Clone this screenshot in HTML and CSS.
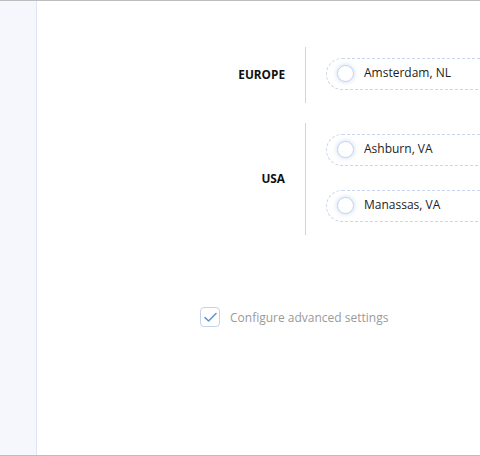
FILE: index.html
```html
<!doctype html>
<html lang="en">
<head>
  <meta charset="UTF-8">
  <title>Regions</title>
  <link rel="stylesheet" href="styles.css">
</head>
<body>
  <div class="frame">
    <div class="sidebar"></div>

    <div class="main">
      <div class="regions">
        <div class="group">
          <div class="label">EUROPE</div>
          <div class="options">
            <label class="pill"><span class="radio"></span>Amsterdam, NL</label>
          </div>
        </div>

        <div class="group">
          <div class="label">USA</div>
          <div class="options">
            <label class="pill"><span class="radio"></span>Ashburn, VA</label>
            <label class="pill"><span class="radio"></span>Manassas, VA</label>
          </div>
        </div>
      </div>

      <label class="advanced">
        <span class="checkbox">
          <svg width="13" height="11" viewBox="0 0 13 11"><path d="M1 5.6 L4.6 9 L12 1.5" fill="none" stroke="#5b93d8" stroke-width="1.5" stroke-linecap="round" stroke-linejoin="round"/></svg>
        </span>
        Configure advanced settings
      </label>
    </div>
  </div>
</body>
</html>
```

FILE: styles.css
```css
html, body{
  margin:0;
  padding:0;
}
body {
  font-family: "Open Sans", "Liberation Sans", sans-serif;
  font-size: 12px;
  color: #1c1c1c;
  background: #fff;
}
.frame {
  display: flex;
  height: 456px;
  box-sizing: border-box;
  border-top: 1px solid #bdbdbd;
  border-bottom: 1px solid #bdbdbd;
  overflow: hidden;
}
.sidebar {
  width: 36px;
  flex: none;
  background: #f5f7fc;
  border-right: 1px solid #dbe5f4;
}
.main {
  flex: 1;
  overflow: hidden;
  padding-top: 46px;
}
.regions {
  display: flex;
  flex-direction: column;
  gap: 20px;
}
.group {
  display: flex;
}
.label {
  width: 248px;
  flex: none;
  padding-right: 20px;
  padding-bottom: 2px;
  text-align: right;
  align-self: center;
  font-weight: 700;
  font-size: 11.8px;
  color: #111;
}
.options {
  border-left: 1px solid #c9d6ea;
  padding: 11px 0 13px 20px;
  display: flex;
  flex-direction: column;
  gap: 24px;
}
.pill {
  width: 220px;
  height: 32px;
  box-sizing: border-box;
  border: 1px dashed #c7d6ee;
  border-radius: 16px;
  display: flex;
  align-items: center;
  padding-left: 10px;
  gap: 10px;
  white-space: nowrap;
}
.pill .radio {
  margin-top: 1px;
}
.pill {
  line-height: 14px;
  padding-bottom: 2px;
}
.radio {
  width: 17px;
  height: 17px;
  box-sizing: border-box;
  border: 1.5px solid #c3d3ee;
  border-radius: 50%;
  background: #fff;
  box-shadow: 0 0 4px 1px #dbe5f6;
}
.advanced {
  display: flex;
  align-items: center;
  gap: 10px;
  margin: 72px 0 0 163px;
  color: #9a9a9a;
  font-size: 12px;
}
.checkbox {
  width: 20px;
  height: 20px;
  box-sizing: border-box;
  border: 1px solid #c3d3ee;
  border-radius: 4px;
  display: flex;
  align-items: center;
  justify-content: center;
}
```
